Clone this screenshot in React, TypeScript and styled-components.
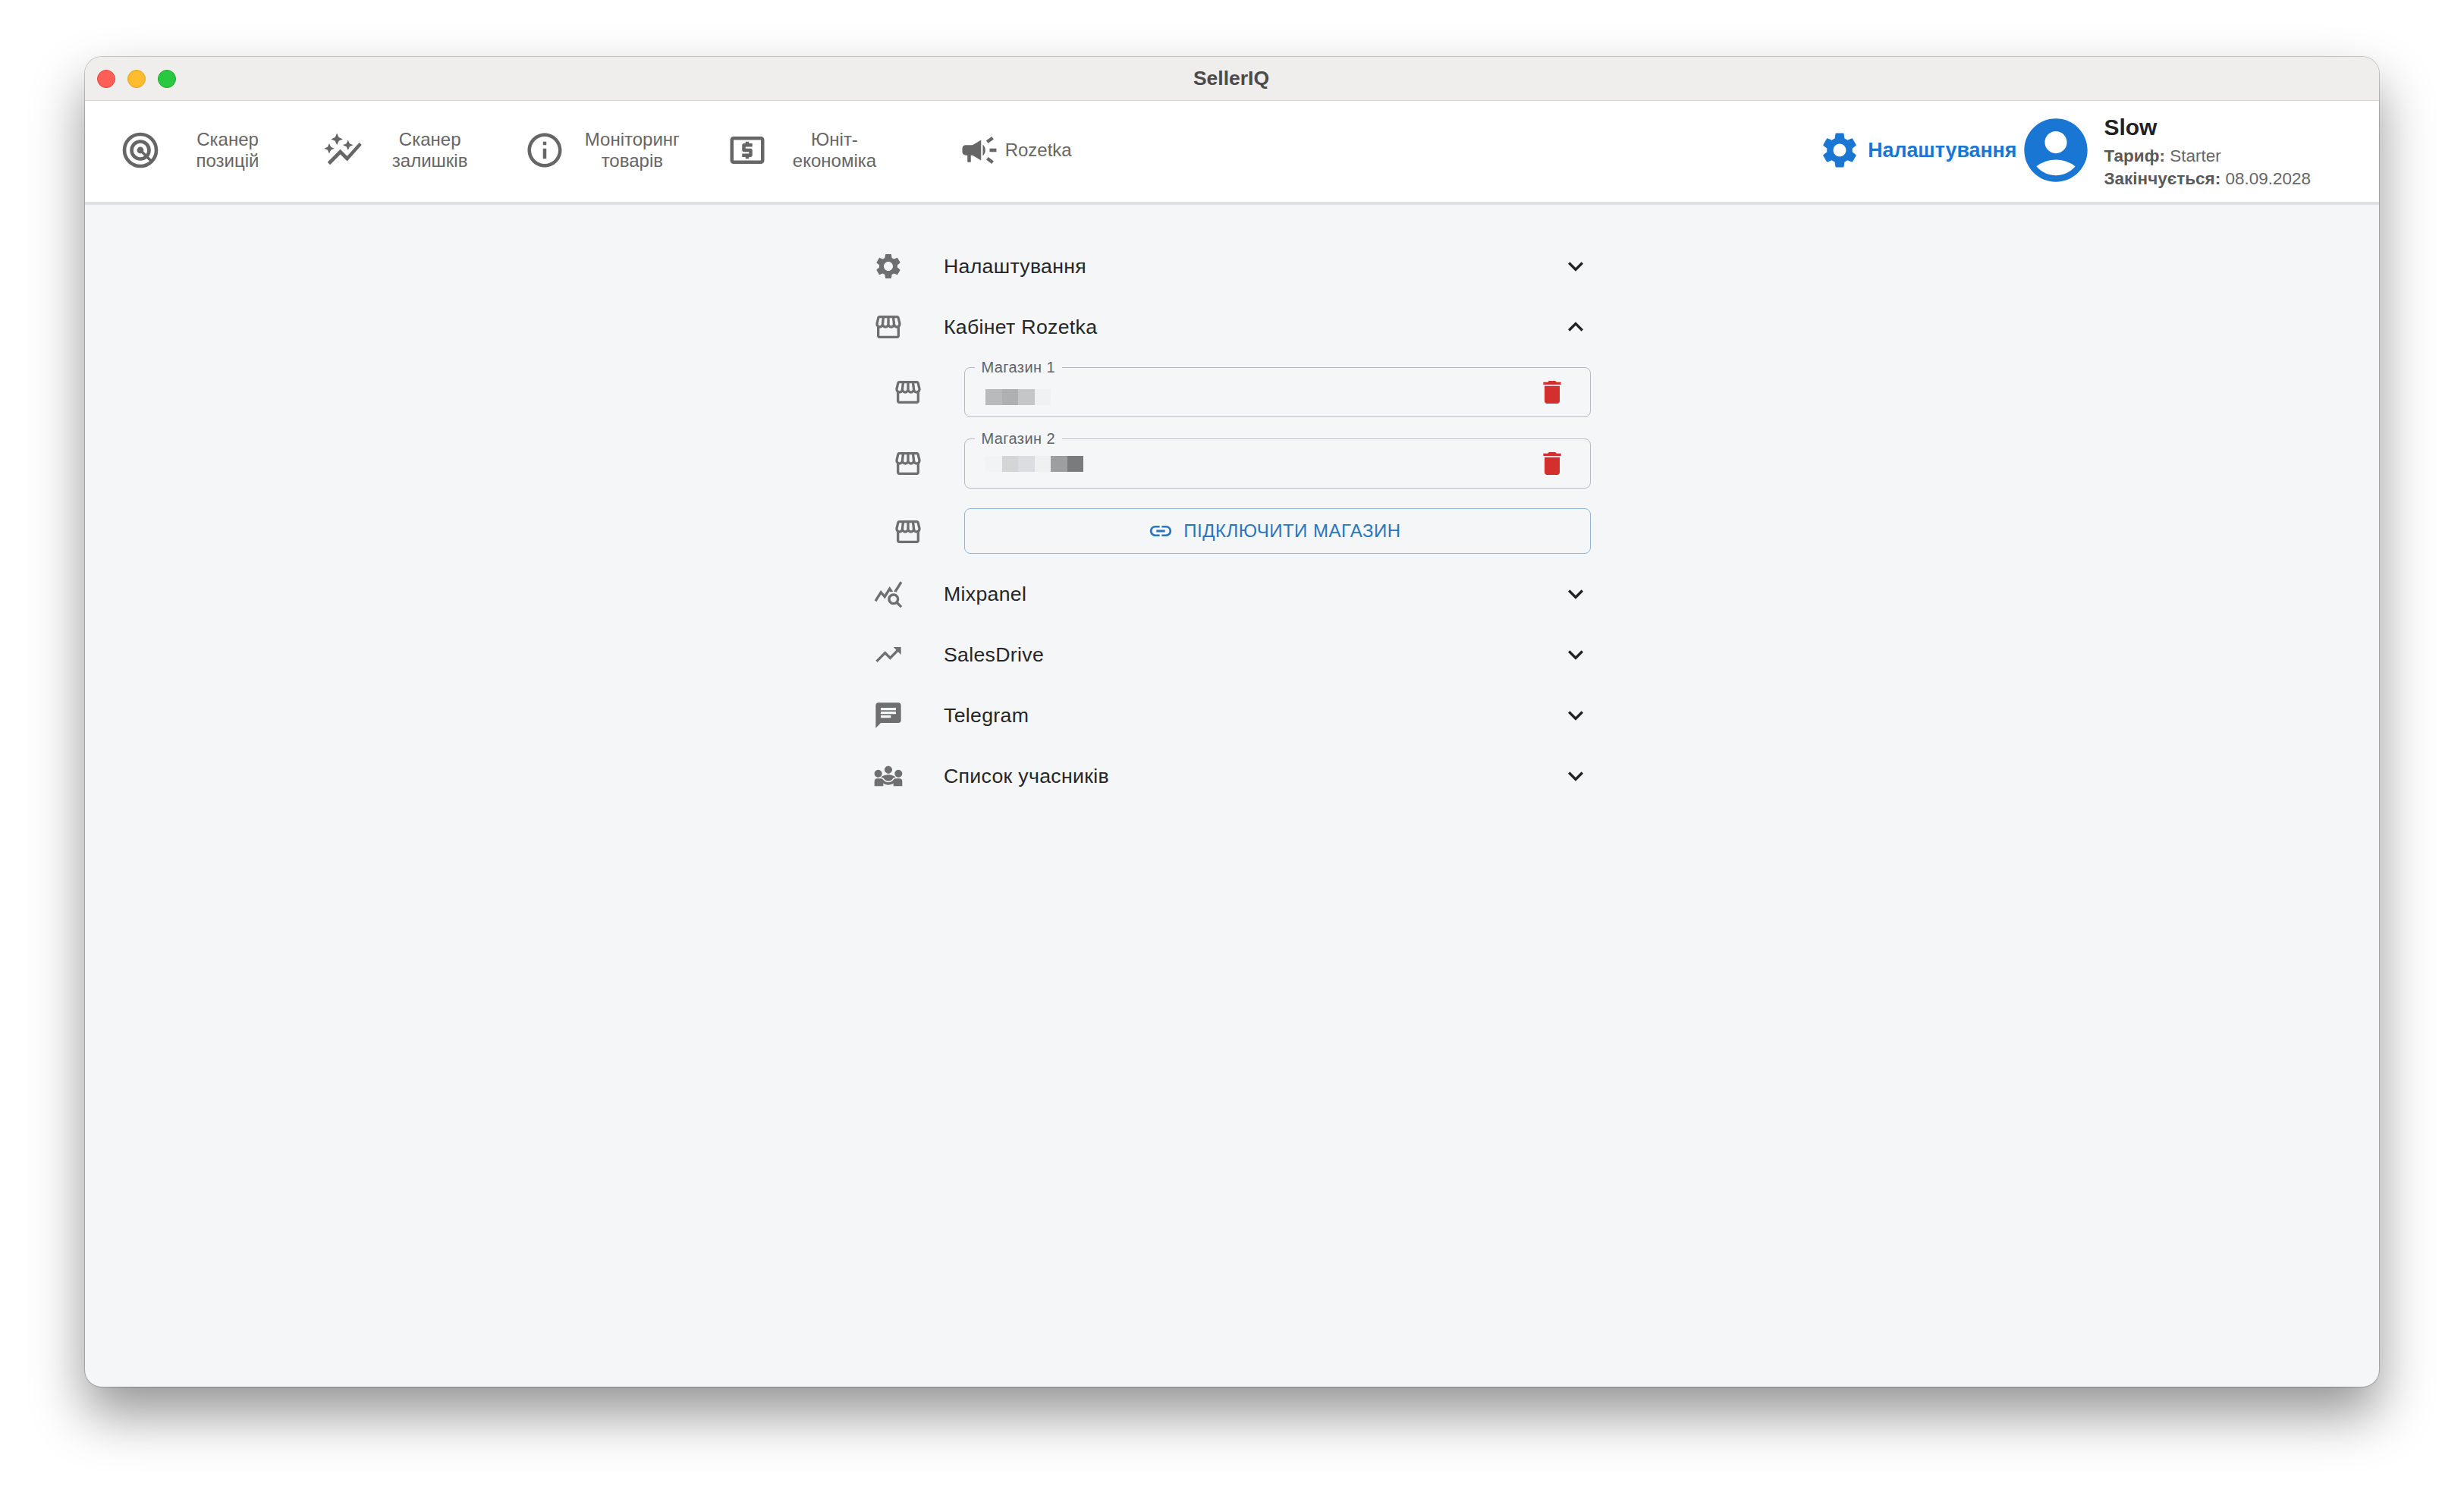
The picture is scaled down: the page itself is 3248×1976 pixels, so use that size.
import React from "react";
import styled, { createGlobalStyle } from "styled-components";
import {
  MdAccountCircle,
  MdAutoGraph,
  MdCampaign,
  MdChat,
  MdDelete,
  MdDiversity3,
  MdExpandLess,
  MdExpandMore,
  MdInfoOutline,
  MdLink,
  MdLocalAtm,
  MdOutlineStorefront,
  MdQueryStats,
  MdSettings,
  MdTrendingUp,
} from "react-icons/md";

const GlobalStyle = createGlobalStyle`
  html, body {
    margin: 0;
    padding: 0;
    background: #ffffff;
  }
  body {
    font-family: "Liberation Sans", Arial, sans-serif;
  }
`;

const Page = styled.div`
  width: 3248px;
  height: 1976px;
  padding: 75px 112px 148px;
  box-sizing: border-box;
  background: #ffffff;
  overflow: hidden;
`;

const Window = styled.div`
  height: 100%;
  display: flex;
  flex-direction: column;
  border-radius: 22px;
  overflow: hidden;
  background: #f5f6f8;
  box-shadow: 0 0 0 1px rgba(0, 0, 0, 0.2), 0 36px 70px rgba(0, 0, 0, 0.42);
`;

const TitleBar = styled.div`
  height: 58px;
  flex: none;
  display: flex;
  align-items: center;
  padding-left: 16px;
  gap: 16px;
  box-sizing: border-box;
  background: #efeeec;
  border-bottom: 1px solid #d6d6d6;
`;

const Light = styled.span<{ $color: string; $edge: string }>`
  width: 24px;
  height: 24px;
  border-radius: 50%;
  box-sizing: border-box;
  background: ${(p) => p.$color};
  border: 1px solid ${(p) => p.$edge};
`;

const WindowTitle = styled.div`
  flex: 1;
  text-align: center;
  margin-right: 138px;
  font-size: 26.5px;
  font-weight: 700;
  color: #4b4b4b;
`;

const Header = styled.header`
  height: 137px;
  flex: none;
  display: flex;
  align-items: center;
  justify-content: space-between;
  box-sizing: border-box;
  padding: 0 90px 3px 46px;
  background: #ffffff;
  border-bottom: 4px solid #dedfe0;
`;

const Tabs = styled.nav`
  display: flex;
  align-items: center;
`;

const Tab = styled.div<{ $wide?: boolean }>`
  width: 266.67px;
  display: flex;
  align-items: center;
  box-sizing: border-box;
  color: #666666;
  font-size: 24px;
  line-height: 28px;
  padding-left: ${(p) => (p.$wide ? "39px" : "0")};
  gap: ${(p) => (p.$wide ? "7px" : "14px")};
`;

const TabIcon = styled.span`
  width: 54px;
  height: 54px;
  flex: none;
  font-size: 54px;
  color: #666666;
  display: flex;
  align-items: center;
  justify-content: center;
`;

const TabLabel = styled.span<{ $wide?: boolean }>`
  width: ${(p) => (p.$wide ? "auto" : "148px")};
  text-align: center;
`;

const Account = styled.div`
  display: flex;
  align-items: center;
`;

const SettingsLink = styled.div`
  display: flex;
  align-items: center;
  gap: 9px;
  color: #1976d2;
  font-size: 26.8px;
  font-weight: 700;
`;

const SettingsIcon = styled(MdSettings)`
  width: 56px;
  height: 56px;
`;

const Avatar = styled(MdAccountCircle)`
  width: 100px;
  height: 100px;
  color: #1976d2;
  margin-left: 2px;
`;

const UserInfo = styled.div`
  margin: 5px 0 0 13px;
  color: #666666;
`;

const UserName = styled.div`
  font-size: 30px;
  line-height: 36px;
  font-weight: 700;
  color: #222222;
  margin-bottom: 5px;
`;

const UserMeta = styled.div`
  font-size: 22.5px;
  line-height: 30px;

  b {
    color: #5a5a5a;
  }
`;

const Content = styled.main`
  flex: 1;
  display: flex;
  flex-direction: column;
  align-items: center;
  padding-top: 41px;
`;

const SettingsList = styled.div`
  width: 946px;
`;

const Row = styled.div`
  height: 80px;
  display: flex;
  align-items: center;
  color: #262626;
  font-size: 26.7px;
  letter-spacing: 0.3px;
`;

const RowIcon = styled.span`
  width: 40px;
  height: 40px;
  flex: none;
  font-size: 40px;
  color: #6f6f72;
  display: flex;
  align-items: center;
  justify-content: center;
`;

const RowLabel = styled.span`
  flex: 1;
  margin-left: 53px;
`;

const Chevron = styled.span`
  width: 40px;
  height: 40px;
  font-size: 40px;
  color: #222222;
  display: flex;
`;

const SubList = styled.div`
  display: flex;
  flex-direction: column;
  padding: 1px 0 13px 26px;
`;

const SubRow = styled.div<{ $gap: number }>`
  display: flex;
  align-items: center;
  gap: 54px;
  margin-bottom: ${(p) => p.$gap}px;
`;

const SubIcon = styled(RowIcon)<{ $shift?: boolean }>`
  margin-top: ${(p) => (p.$shift ? "12px" : "0")};
`;

const Field = styled.fieldset`
  flex: 1;
  height: 78px;
  margin: 0;
  padding: 0 30px 0 27px;
  box-sizing: border-box;
  min-width: 0;
  display: flex;
  align-items: center;
  justify-content: space-between;
  border: 1.5px solid #b7babf;
  border-radius: 8px;
`;

const FieldLegend = styled.legend`
  margin-left: -14.5px;
  padding: 0 9px;
  font-size: 20px;
  line-height: 24px;
  color: #606368;
  letter-spacing: 0.4px;
`;

const Mosaic = styled.div<{ $offset: number }>`
  display: flex;
  margin-top: ${(p) => p.$offset}px;
`;

const Tile = styled.span<{ $color: string }>`
  width: 21.5px;
  height: 21px;
  background: ${(p) => p.$color};
`;

const DeleteIcon = styled(MdDelete)`
  width: 40px;
  height: 40px;
  color: #d32f2f;
  margin-top: -12px;
`;

const ConnectButton = styled.button`
  flex: 1;
  height: 60px;
  display: flex;
  align-items: center;
  justify-content: center;
  gap: 13px;
  padding: 0 8px 0 0;
  margin-top: -1px;
  background: transparent;
  border: 1.5px solid #8fb5da;
  border-radius: 8px;
  color: #2a75bd;
  font-family: inherit;
  font-size: 24px;
  letter-spacing: 0.5px;
  text-transform: uppercase;
`;

const LinkIcon = styled(MdLink)`
  width: 34px;
  height: 34px;
`;

// concentric rings with a tail running out to the lower right
function TargetIcon() {
  return (
    <svg width="54" height="54" viewBox="0 0 54 54" fill="none" stroke="currentColor" strokeWidth="4.6">
      <circle cx="27" cy="27" r="21" />
      <circle cx="27" cy="27" r="11.5" />
      <circle cx="27" cy="27" r="4.4" fill="currentColor" stroke="none" />
      <path d="M27 27 L41 41" strokeWidth="3.6" />
    </svg>
  );
}

const tabs = [
  { icon: <TargetIcon />, label: ["Сканер", "позицій"] },
  { icon: <MdAutoGraph />, label: ["Сканер", "залишків"] },
  { icon: <MdInfoOutline />, label: ["Моніторинг", "товарів"] },
  { icon: <MdLocalAtm />, label: ["Юніт-", "економіка"] },
];

const stores = [
  { tiles: ["#b9babc", "#afb0b2", "#c5c6c8", "#f0f1f3"], offset: 1, gap: 16 },
  { tiles: ["#f2f3f5", "#d4d5d7", "#dcdde0", "#eff0f2", "#9d9ea0", "#7a7b7d"], offset: -11, gap: 27 },
];

const bottomRows = [
  { icon: <MdQueryStats />, label: "Mixpanel" },
  { icon: <MdTrendingUp />, label: "SalesDrive" },
  { icon: <MdChat />, label: "Telegram" },
  { icon: <MdDiversity3 />, label: "Список учасників" },
];

export default function App() {
  return (
    <Page>
      <GlobalStyle />
      <Window>
        <TitleBar>
          <Light $color="#ff5f57" $edge="#e2463f" />
          <Light $color="#febc2e" $edge="#dfa023" />
          <Light $color="#28c840" $edge="#1aab29" />
          <WindowTitle>SellerIQ</WindowTitle>
        </TitleBar>
        <Header>
          <Tabs>
            {tabs.map((tab) => (
              <Tab key={tab.label[0] + tab.label[1]}>
                <TabIcon>{tab.icon}</TabIcon>
                <TabLabel>
                  {tab.label[0]}
                  <br />
                  {tab.label[1]}
                </TabLabel>
              </Tab>
            ))}
            <Tab $wide>
              <TabIcon>
                <MdCampaign />
              </TabIcon>
              <TabLabel $wide>Rozetka</TabLabel>
            </Tab>
          </Tabs>
          <Account>
            <SettingsLink>
              <SettingsIcon />
              Налаштування
            </SettingsLink>
            <Avatar />
            <UserInfo>
              <UserName>Slow</UserName>
              <UserMeta>
                <b>Тариф:</b> Starter
              </UserMeta>
              <UserMeta>
                <b>Закінчується:</b> 08.09.2028
              </UserMeta>
            </UserInfo>
          </Account>
        </Header>
        <Content>
          <SettingsList>
            <Row>
              <RowIcon>
                <MdSettings />
              </RowIcon>
              <RowLabel>Налаштування</RowLabel>
              <Chevron>
                <MdExpandMore />
              </Chevron>
            </Row>
            <Row>
              <RowIcon>
                <MdOutlineStorefront />
              </RowIcon>
              <RowLabel>Кабінет Rozetka</RowLabel>
              <Chevron>
                <MdExpandLess />
              </Chevron>
            </Row>
            <SubList>
              {stores.map((store, index) => (
                <SubRow key={index} $gap={store.gap}>
                  <SubIcon $shift>
                    <MdOutlineStorefront />
                  </SubIcon>
                  <Field>
                    <FieldLegend>Магазин {index + 1}</FieldLegend>
                    <Mosaic $offset={store.offset}>
                      {store.tiles.map((color, i) => (
                        <Tile key={i} $color={color} />
                      ))}
                    </Mosaic>
                    <DeleteIcon />
                  </Field>
                </SubRow>
              ))}
              <SubRow $gap={0}>
                <SubIcon>
                  <MdOutlineStorefront />
                </SubIcon>
                <ConnectButton>
                  <LinkIcon />
                  Підключити магазин
                </ConnectButton>
              </SubRow>
            </SubList>
            {bottomRows.map((row) => (
              <Row key={row.label}>
                <RowIcon>{row.icon}</RowIcon>
                <RowLabel>{row.label}</RowLabel>
                <Chevron>
                  <MdExpandMore />
                </Chevron>
              </Row>
            ))}
          </SettingsList>
        </Content>
      </Window>
    </Page>
  );
}
